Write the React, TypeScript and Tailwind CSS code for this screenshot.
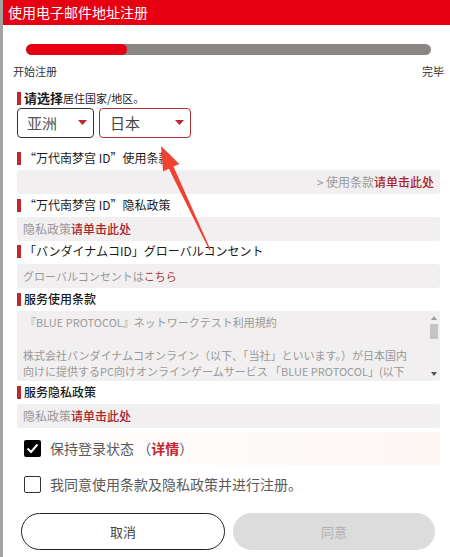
const Label = ({ children, strong }: { children: React.ReactNode; strong?: boolean }) => (
  <div className="ml-[14px] flex items-center gap-[3px] h-[14px]">
    <div className="w-[4px] h-[13px] bg-[#c0282d]" />
    <div className={`text-[12px] leading-[14px] text-[#1a1a1a] ${strong ? "font-medium" : "font-normal"}`}>
      {children}
    </div>
  </div>
);

const GreyBox = ({ children, right }: { children: React.ReactNode; right?: boolean }) => (
  <div
    className={`ml-[14px] mr-[10px] h-[24px] bg-[#f1efef] rounded-[3px] flex items-center px-[6px] text-[12px] text-[#999] ${
      right ? "justify-end" : ""
    }`}
  >
    {children}
  </div>
);

const Link = ({ children }: { children: React.ReactNode }) => (
  <span className="text-[#a8262b] font-medium">{children}</span>
);

const Caret = () => (
  <svg width="9" height="6" viewBox="0 0 9 6">
    <polygon points="0,0 9,0 4.5,5" fill="#c0282d" />
  </svg>
);

export default function App() {
  return (
    <div className="relative w-[450px] h-[557px] overflow-hidden bg-white flex font-['Noto_Sans_CJK_SC','Noto_Sans_CJK_JP',sans-serif]">
      <div className="w-[3px] bg-[#a3a3a3]" />
      <div className="flex-1 flex flex-col">
        <div className="h-[25px] bg-[#e60012] px-[5px] text-white text-[14px] leading-[25px]">
          使用电子邮件地址注册
        </div>

        {/* progress */}
        <div className="mt-[19px] ml-[23px] mr-[19px] h-[11px] rounded-full bg-[#8a8684] overflow-hidden">
          <div className="h-full w-[101px] rounded-full bg-[#e60012]" />
        </div>
        <div className="mt-[8px] pl-[10px] pr-[6px] flex justify-between text-[11px] leading-[16px] text-[#333]">
          <span>开始注册</span>
          <span>完毕</span>
        </div>

        <div className="mt-[12px]">
          <Label>
            <span className="text-[13px] font-bold">请选择</span>
            <span className="text-[11px]">居住国家/地区。</span>
          </Label>
        </div>
        <div className="mt-[3px] ml-[14px] flex gap-[5px]">
          <div className="w-[77px] h-[30px] border border-[#333] rounded-[4px] flex items-center justify-between pl-[9px] pr-[6px] text-[15px] text-[#555]">
            <span>亚洲</span>
            <Caret />
          </div>
          <div className="w-[92px] h-[30px] border-[1.5px] border-[#a8322d] rounded-[4px] flex items-center justify-between pl-[10px] pr-[6px] text-[15px] text-[#444]">
            <span>日本</span>
            <Caret />
          </div>
        </div>

        <div className="mt-[13px]">
          <Label>“万代南梦宫 ID”使用条款</Label>
        </div>
        <div className="mt-[5px]">
          <GreyBox right>
            <span>&gt; 使用条款</span>
            <Link>请单击此处</Link>
          </GreyBox>
        </div>

        <div className="mt-[4px]">
          <Label>“万代南梦宫 ID”隐私政策</Label>
        </div>
        <div className="mt-[5px]">
          <GreyBox>
            <span>隐私政策</span>
            <Link>请单击此处</Link>
          </GreyBox>
        </div>

        <div className="mt-[3px]">
          <Label>「バンダイナムコID」グローバルコンセント</Label>
        </div>
        <div className="mt-[6px]">
          <GreyBox>
            <span className="text-[11px]">グローバルコンセントは</span>
            <span className="text-[11px] text-[#b0383c]">こちら</span>
          </GreyBox>
        </div>

        <div className="mt-[4px]">
          <Label strong>服务使用条款</Label>
        </div>
        <div className="mt-[5px] ml-[14px] mr-[10px] h-[70px] bg-[#f1efef] rounded-[3px] flex overflow-hidden">
          <div className="flex-1 pl-[6px] pt-[3px] text-[11px] leading-[16px] text-[#999] whitespace-nowrap overflow-hidden">
            <div className="pl-[2px]">『BLUE PROTOCOL』ネットワークテスト利用規約</div>
            <div className="h-[17px]" />
            <div>株式会社バンダイナムコオンライン（以下、「当社」といいます。）が日本国内</div>
            <div>向けに提供するPC向けオンラインゲームサービス 「BLUE PROTOCOL」(以下</div>
          </div>
          <div className="w-[12px] flex flex-col items-center pt-[5px] pb-[5px]">
            <svg width="6" height="4" viewBox="0 0 6 4">
              <polygon points="0,4 6,4 3,0" fill="#a0a0a0" />
            </svg>
            <div className="mt-[4px] w-[8px] h-[15px] bg-[#c4c4c4]" />
            <div className="flex-1" />
            <svg width="6" height="4" viewBox="0 0 6 4">
              <polygon points="0,0 6,0 3,4" fill="#555" />
            </svg>
          </div>
        </div>

        <div className="mt-[4px]">
          <Label strong>服务隐私政策</Label>
        </div>
        <div className="mt-[5px]">
          <GreyBox>
            <span>隐私政策</span>
            <Link>请单击此处</Link>
          </GreyBox>
        </div>

        {/* checkboxes */}
        <div className="mt-[4px] ml-[14px] mr-[10px] h-[33px] flex items-center pl-[7px] gap-[9px] bg-gradient-to-r from-white via-[#fefaf8] to-[#fdf7f4]">
          <div className="w-[17px] h-[17px] bg-black rounded-[2px] flex items-center justify-center">
            <svg width="13" height="11" viewBox="0 0 13 11">
              <polyline points="1.5,5.5 5,9 11.5,1.5" fill="none" stroke="white" strokeWidth="2" />
            </svg>
          </div>
          <span className="text-[14px] text-[#5a5a5a]">
            保持登录状态 （<span className="text-[#c0282d] font-bold">详情</span>）
          </span>
        </div>
        <div className="mt-[2px] ml-[14px] h-[34px] flex items-center pl-[7px] gap-[9px]">
          <div className="w-[17px] h-[17px] border border-[#333] rounded-[2px] bg-white" />
          <span className="text-[14px] text-[#5a5a5a]">我同意使用条款及隐私政策并进行注册。</span>
        </div>

        <div className="mt-[12px] ml-[18px] mr-[15px] flex gap-[8px]">
          <div className="flex-1 h-[37px] rounded-full border-[1.5px] border-[#222] flex items-center justify-center text-[13px] text-[#444]">
            取消
          </div>
          <div className="flex-1 h-[37px] rounded-full bg-[#dcdcdc] flex items-center justify-center text-[13px] text-[#b0b0b0]">
            同意
          </div>
        </div>
      </div>

      {/* annotation arrow */}
      <svg className="absolute left-0 top-0 pointer-events-none" width="450" height="557" viewBox="0 0 450 557">
        <polygon
          points="161,146 179.3,163.9 173.5,166.6 210.6,249.7 209.4,250.3 168.9,168.8 163.1,171.5"
          fill="#ef4230"
        />
      </svg>
    </div>
  );
}
